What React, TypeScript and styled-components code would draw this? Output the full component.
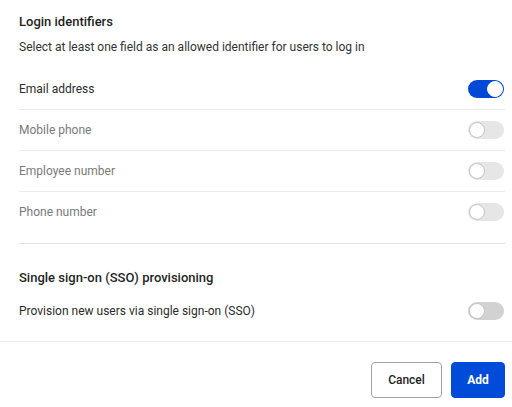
import React from "react";
import styled, { createGlobalStyle } from "styled-components";

const Global = createGlobalStyle`
  html, body { margin: 0; padding: 0; background: #fff; }
  body { font-family: Roboto, "Liberation Sans", Arial, sans-serif; font-size: 12px; color: #262626; }
`;

const Dialog = styled.div`
  width: 512px;
  height: 407px;
  display: flex;
  flex-direction: column;
  background: #fff;
`;

const Body = styled.div`
  padding: 12px 7px 0 19px;
  display: flex;
  flex-direction: column;
`;

const Heading = styled.div<{ $top?: number }>`
  font-size: 13px;
  font-weight: 500;
  line-height: 20px;
  color: #1f1f1f;
  margin-top: ${(p) => p.$top ?? 0}px;
`;

const Subtitle = styled.div`
  font-size: 12px;
  line-height: 20px;
  margin-top: 5px;
  color: #333;
`;

const List = styled.div<{ $top: number }>`
  display: flex;
  flex-direction: column;
  margin-top: ${(p) => p.$top}px;
`;

const Row = styled.div<{ $divider?: boolean }>`
  height: 40px;
  display: flex;
  align-items: center;
  justify-content: space-between;
  border-bottom: ${(p) => (p.$divider ? "1px solid #ececec" : "none")};
`;

const Label = styled.span<{ $disabled?: boolean }>`
  font-size: 12px;
  color: ${(p) => (p.$disabled ? "#7a7a7a" : "#2b2b2b")};
`;

const Track = styled.span<{ $on?: boolean; $disabled?: boolean }>`
  position: relative;
  width: 36px;
  height: 18px;
  border-radius: 9px;
  box-sizing: border-box;
  background: ${(p) => (p.$on ? "#0049d6" : p.$disabled ? "#e6e6e6" : "#d2d2d2")};
  margin-right: 1px;
`;

const Knob = styled.span<{ $on?: boolean }>`
  position: absolute;
  top: 1px;
  left: ${(p) => (p.$on ? "19px" : "1px")};
  width: 16px;
  height: 16px;
  box-sizing: border-box;
  border-radius: 50%;
  background: #fff;
  border: 1px solid ${(p) => (p.$on ? "#fff" : "#c4c4c4")};
`;

const Rule = styled.div`
  height: 1px;
  background: #e3e3e3;
  margin-top: 11px;
`;

const Footer = styled.div`
  border-top: 1px solid #ebebeb;
  margin-top: 10px;
  padding: 20px 7px 0 0;
  display: flex;
  justify-content: flex-end;
  gap: 9px;
`;

const Button = styled.button<{ $primary?: boolean }>`
  height: 36px;
  padding: 0 ${(p) => (p.$primary ? "15px" : "15px")};
  min-width: ${(p) => (p.$primary ? "54px" : "71px")};
  border-radius: 4px;
  font-family: Roboto, "Liberation Sans", Arial, sans-serif;
  font-size: 12px;
  font-weight: ${(p) => (p.$primary ? 700 : 500)};
  color: ${(p) => (p.$primary ? "#fff" : "#1f1f1f")};
  background: ${(p) => (p.$primary ? "#004bd8" : "#fff")};
  border: 1px solid ${(p) => (p.$primary ? "#004bd8" : "#a3a3a3")};
  cursor: pointer;
`;

function Toggle({ on, disabled }: { on?: boolean; disabled?: boolean }) {
  return (
    <Track $on={on} $disabled={disabled}>
      <Knob $on={on} />
    </Track>
  );
}

const identifiers = [
  { label: "Email address", on: true, disabled: false },
  { label: "Mobile phone", on: false, disabled: true },
  { label: "Employee number", on: false, disabled: true },
  { label: "Phone number", on: false, disabled: true },
];

export default function App() {
  return (
    <Dialog>
      <Global />
      <Body>
        <Heading>Login identifiers</Heading>
        <Subtitle>Select at least one field as an allowed identifier for users to log in</Subtitle>
        <List $top={12}>
          {identifiers.map((it, i) => (
            <Row key={it.label} $divider={i < identifiers.length - 1}>
              <Label $disabled={it.disabled}>{it.label}</Label>
              <Toggle on={it.on} disabled={it.disabled} />
            </Row>
          ))}
        </List>
        <Rule />
        <Heading $top={24}>Single sign-on (SSO) provisioning</Heading>
        <List $top={3}>
          <Row>
            <Label>Provision new users via single sign-on (SSO)</Label>
            <Toggle />
          </Row>
        </List>
      </Body>
      <Footer>
        <Button>Cancel</Button>
        <Button $primary>Add</Button>
      </Footer>
    </Dialog>
  );
}
